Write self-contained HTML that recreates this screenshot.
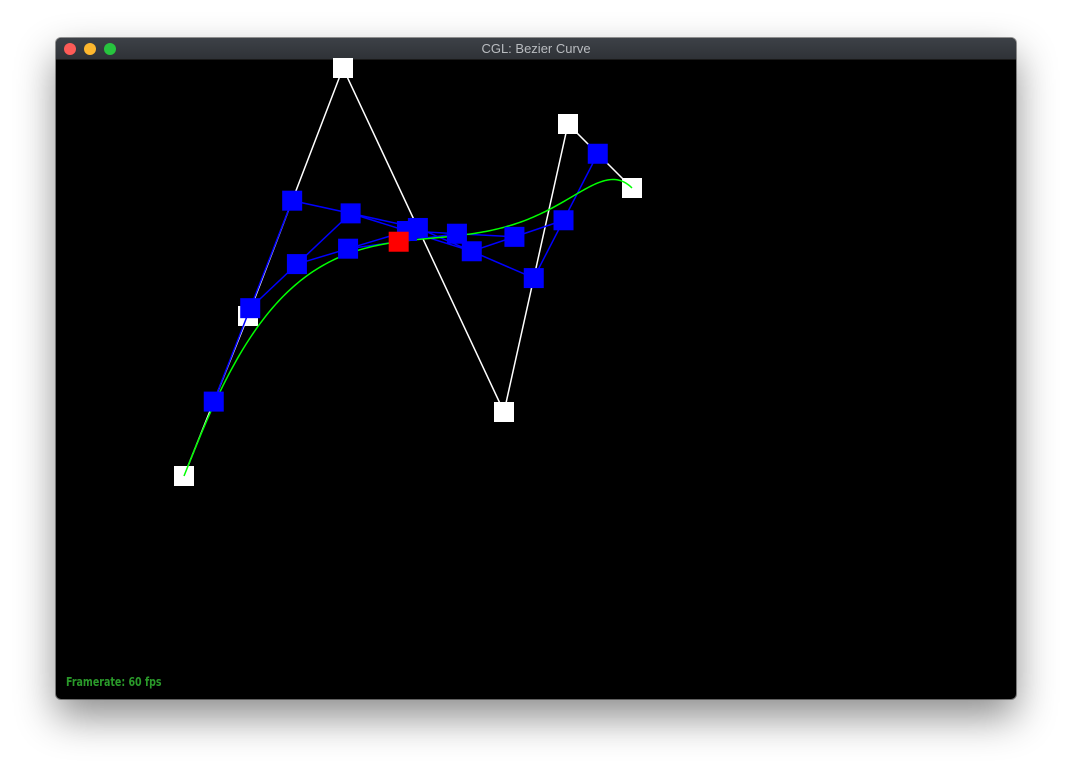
<!DOCTYPE html>
<html><head><style>
html,body{margin:0;padding:0;background:#fff;width:1072px;height:774px;overflow:hidden}
.win{position:absolute;left:56px;top:38px;width:960px;height:661px;border-radius:5px;overflow:hidden;box-shadow:0 18px 40px rgba(0,0,0,0.45),0 0 0 1px rgba(0,0,0,0.4);background:#000}
.tb{height:21px;background:linear-gradient(#3d4147,#2f3237);border-bottom:1px solid #1a1a1a;position:relative;color:#b9bcc0;font:13px "Liberation Sans",sans-serif;text-align:center;line-height:21px}
.d{position:absolute;top:5px;width:12px;height:12px;border-radius:50%}
.fr{position:absolute;left:10px;bottom:10px;color:#2a9a2a;font:bold 12px "DejaVu Sans Condensed","DejaVu Sans",sans-serif;transform:scaleX(0.88);transform-origin:left}
svg{position:absolute;left:0;top:0}
</style></head><body>
<div class="win"><div class="tb"><span class="d" style="left:8px;background:#fd5b57"></span><span class="d" style="left:28px;background:#fdb72e"></span><span class="d" style="left:48px;background:#27c43e"></span>CGL: Bezier Curve</div>
<div class="fr">Framerate: 60 fps</div></div>
<svg id="s" width="1072" height="774"></svg>
<script>
var P=[[184,476],[248,316],[343,68],[504,412],[568,124],[632,188]],t=0.465,s="";
function pl(a,c,w){s+='<polyline fill="none" stroke="'+c+'" stroke-width="'+w+'" points="'+a.map(p=>p.join(',')).join(' ')+'"/>';}
function sq(p,c){s+='<rect x="'+(p[0]-10)+'" y="'+(p[1]-10)+'" width="20" height="20" fill="'+c+'"/>';}
function lv(a,t){var r=[];for(var i=0;i<a.length-1;i++)r.push([a[i][0]+(a[i+1][0]-a[i][0])*t,a[i][1]+(a[i+1][1]-a[i][1])*t]);return r;}
pl(P,"#fff",1.5);P.forEach(p=>sq(p,"#fff"));
var L=[],a=P;while(a.length>1){a=lv(a,t);L.push(a);}
for(var k=0;k<L.length-1;k++)pl(L[k],"#00f",1.5);
var C=[];for(var i=0;i<=200;i++){var b=P,u=i/200;while(b.length>1)b=lv(b,u);C.push(b[0]);}
pl(C,"#0f0",1.5);
for(var k=0;k<L.length-1;k++)L[k].forEach(p=>sq(p,"#00f"));
sq(L[L.length-1][0],"#f00");
document.getElementById("s").innerHTML=s;
</script>
</body></html>
